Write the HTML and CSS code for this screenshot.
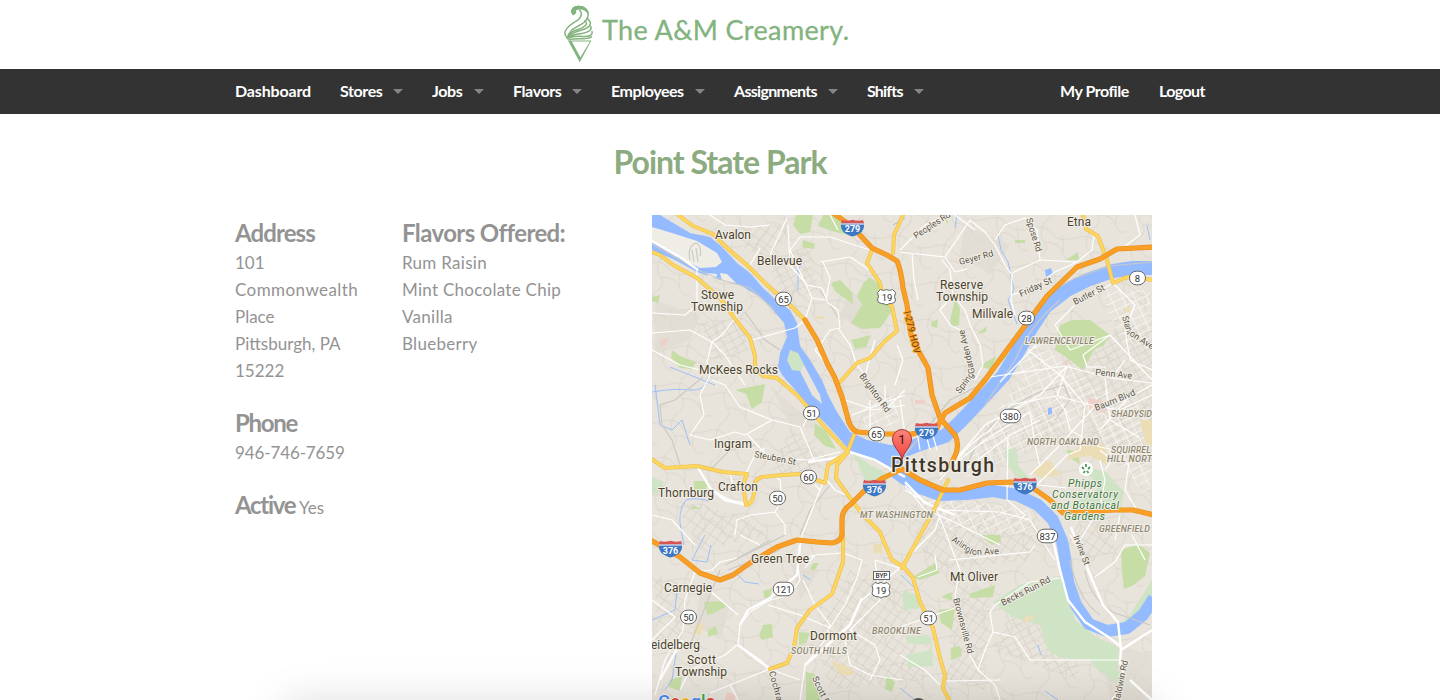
FILE: index.html
```html
<!DOCTYPE html>
<html lang="en">
<head>
<meta charset="utf-8">
<title>Point State Park | The A&amp;M Creamery</title>
<link rel="stylesheet" href="styles.css">
</head>
<body>
<header class="brand">
  <svg class="brand-logo" width="290" height="69" viewBox="560 0 290 69" role="img">
    <g class="cone">
      <path d="M573.4 14.2C570 11 572.5 6.8 578 6.6C584.5 6.4 588.6 10 588.2 15C587.8 18.5 585.5 21.8 581.5 24.2C575 27.8 568.8 30 567.4 38.5" />
      <path class="solid" d="M573 15.4C569.5 11 572.5 6 578.5 5.8C584 5.6 588.2 9 588.5 14.6C586.5 11.4 583 9.5 579.6 9.6C576.5 9.7 574.6 11.4 575.5 13.3Z" />
      <path d="M573.5 14.2C576 13.3 576.2 10.6 574.2 11M579.5 10C583 13.5 581.4 17.6 577 20.6C570.2 24.4 565.8 28 564.8 32.5C564.6 34.2 565.6 36 567.2 38" />
      <path d="M586.6 18.5C592 21.5 591.6 25.8 585.8 28.5C579.6 31.2 571.5 32 568.5 36.5" />
      <path d="M585 20.6C588 23.4 586.6 25.5 582 27.8C577.5 30 572 31 568.5 35" />
      <path d="M590.8 26.6C592.4 30 588 32.4 582 33.4C576 34.4 571 34.7 567.5 38M592 31.5C593 36 588 36.8 582 36.4C576 36 571 36.5 567.8 38.6" />
      <path d="M591.5 36.8C586 40.2 577 37.8 569 39.8" />
      <path class="solid" fill-rule="evenodd" d="M568 40.4L591.4 40.4L579.8 62.2ZM571.8 41.6L580.4 57.2L590 41.6Z" />
    </g>
    <text class="brand-name" x="602" y="40" textLength="247">The A&amp;M Creamery.</text>
  </svg>
</header>
<nav class="topbar">
  <ul class="menu">
    <li class="item w-dashboard"><a>Dashboard</a></li>
    <li class="item drop w-stores"><a>Stores</a></li>
    <li class="item drop w-jobs"><a>Jobs</a></li>
    <li class="item drop w-flavors"><a>Flavors</a></li>
    <li class="item drop w-employees"><a>Employees</a></li>
    <li class="item drop w-assignments"><a>Assignments</a></li>
    <li class="item drop w-shifts"><a>Shifts</a></li>
    <li class="item w-profile"><a>My Profile</a></li>
    <li class="item w-logout"><a>Logout</a></li>
  </ul>
</nav>
<main class="page">
  <h1 class="title">Point State Park</h1>
  <div class="columns">
    <section class="details">
      <h2 class="label l-address">Address</h2>
      <p class="text">101<br><span class="wide">Commonwealth</span><br>Place<br>Pittsburgh, PA<br>15222</p>
      <h2 class="label l-phone">Phone</h2>
      <p class="text t-phone">946-746-7659</p>
      <p class="text t-active"><strong class="label l-active">Active</strong> Yes</p>
    </section>
    <section class="flavors">
      <h2 class="label l-flavors">Flavors Offered:</h2>
      <p class="text t-flavors">Rum Raisin<br>Mint Chocolate Chip<br>Vanilla<br>Blueberry</p>
    </section>
    <svg class="map" width="500" height="485" viewBox="652 215 500 485">
      <defs>
        <pattern id="streets" width="9" height="7" patternUnits="userSpaceOnUse" patternTransform="rotate(-28)"><path d="M0 .5H9M.5 0V7" class="street"/></pattern>
        <pattern id="streets2" width="8" height="10" patternUnits="userSpaceOnUse" patternTransform="rotate(35)"><path d="M0 .5H8M.5 0V10" class="street"/></pattern>
        <pattern id="blocks" width="11" height="8" patternUnits="userSpaceOnUse" patternTransform="rotate(-25)"><path d="M0 .5H11M.5 0V8" class="block"/></pattern>
        <pattern id="lanes" width="46" height="38" patternUnits="userSpaceOnUse" patternTransform="rotate(12)"><path d="M0 8Q12 2 20 10T46 8M10 0Q6 14 14 20T10 38M14 20Q28 16 34 26T46 30M30 10Q34 18 34 26" class="street"/></pattern>
        <linearGradient id="pinFill" x1="0" y1="0" x2="0" y2="1"><stop offset="0" stop-color="#fb857c"/><stop offset="1" stop-color="#f0403a"/></linearGradient>
        <g id="interstate">
          <path d="M-11.5-5.5Q-12.5 2-7 5.6Q-3 8 0 8.6Q3 8 7 5.6Q12.5 2 11.5-5.5Z" class="sh-blue"/>
          <path d="M-11.5-4.5L-10.5-8Q-6-6.5 0-8.3Q6-6.5 10.5-8L11.5-4.5Z" class="sh-red"/>
          <path d="M-11.8-4H11.8" class="sh-line"/>
        </g>
        <g id="route2"><rect x="-8" y="-6.8" width="16" height="13.6" rx="6.8" class="sh-route"/></g>
        <g id="route3"><rect x="-10.3" y="-6.8" width="20.6" height="13.6" rx="6.8" class="sh-route"/></g>
        <path id="usroute" d="M-6-7.5Q-3-5.5 0-7.5Q3-5.5 6-7.5L9-4.5Q7 0 9 3Q9 6 5 6.5Q2 6.5 0 8Q-2 6.5-5 6.5Q-9 6-9 3Q-7 0-9-4.5Z" class="sh-route"/>
      </defs>
      <rect x="652" y="215" width="500" height="485" class="land"/>
      <rect x="652" y="215" width="500" height="485" fill="url(#lanes)"/>
      <g fill="url(#streets)">
        <path d="M765 262L810 245L818 290L787 300ZM700 322L740 320L750 350L715 362ZM790 430L835 460L800 478L770 470ZM985 425L1060 385L1065 435L975 478ZM1060 345L1152 320V470L1090 440ZM1030 580L1070 600L1080 680L990 650Z"/>
      </g>
      <g fill="url(#streets2)">
        <path d="M905 505L975 500L1040 520L1030 560L930 570ZM850 570L905 580L925 680L830 690L815 640ZM950 580L990 590L985 690L950 680ZM655 575L690 585L680 640L655 640ZM735 225L790 225L775 260L745 250ZM675 500L740 515L770 535L700 550ZM1070 525L1110 520L1115 550L1085 565Z"/>
      </g>
      <g fill="url(#blocks)">
        <path d="M985 425L1030 370L1075 360L1100 400L1045 440L965 478ZM1040 340L1075 375L1045 385L1010 370ZM1100 290L1150 290V350L1120 340ZM862 405L895 395L900 425L865 428ZM915 485L960 500L1030 510L1035 535L950 530ZM1070 375L1150 410V500L1110 455Z"/>
      </g>
      <g class="hill">
        <path d="M655 300L700 315L690 340L655 355ZM770 385L820 430L790 425ZM965 225L1010 245L990 275L960 255ZM790 560L820 570L800 600ZM1100 640L1152 655V700H1110ZM850 290L870 305L860 330L840 315ZM700 590L730 605L720 640L695 625Z"/>
      </g>
      <g class="park">
        <path d="M796 215H813L810 232L800 234L793 225ZM823 215H840L850 235L835 232L818 226ZM803 240L815 244L814 249L802 247ZM831 283L840 280L852 292L853 304L843 297L835 291ZM870 277L880 285L892 310L886 320L880 328L862 329L851 323L862 305L857 296L864 282ZM851 340L871 335L866 347L855 349ZM652 297L660 295L658 303L652 301ZM672 350L680 356L696 362L692 369L680 368L671 357ZM735 390L765 384L762 402L752 409L746 394ZM815 423L826 431L836 449L825 446L814 435ZM694 481L709 481L706 490L694 492ZM693 505L700 509L691 509ZM704 602L722 601L727 606L712 614L707 615ZM763 591L772 588L770 600L764 597ZM763 625L772 624L773 637L762 640L759 635ZM708 630L716 626L718 634L708 637ZM799 632L810 633L806 643L799 645ZM813 563L819 563L814 571L810 569ZM670 680L682 676L680 691L669 687ZM806 672L815 674L820 700H806ZM887 675L895 682L892 692L885 689Z"/>
        <path d="M1055 350L1060 325L1072 320L1090 320L1110 335L1104 345L1094 350L1083 370L1066 357ZM1066 260L1078 252L1079 260ZM1015 240H1025V243H1015ZM950 320L955 300L960 308L959 325L952 327ZM931 323L938 319L937 328L931 326ZM981 365L996 356L992 370L982 367ZM977 334L987 326L986 332ZM1014 350L1010 360L1001 367L1006 355ZM941 215H948V224ZM1066 450L1078 451L1080 464L1070 458ZM1121 550L1139 544L1150 553L1145 576L1132 586L1124 589L1122 572ZM941 597L951 592L953 601ZM939 610L955 608L952 630L941 623ZM913 577L935 563L940 573L920 580ZM951 648L960 646L962 656L951 660ZM969 594L995 585L993 597L971 598ZM981 535H1000L1001 542L992 545Z"/>
      </g>
      <g class="forest">
        <path d="M993 602L1020 585L1060 576L1068 590L1075 620L1095 636L1119 648L1117 675L1100 672L1090 660L1060 658L1048 650L1040 625L1015 618L1000 608ZM1078 464L1106 472L1124 492L1121 507L1070 507L1100 487ZM1005 450L1016 448L1018 465L1028 477L1035 484L1020 480L1007 465ZM652 477L664 482L660 492L652 495ZM903 590L916 595L920 608L903 610ZM905 637L928 635L932 645L908 643ZM906 655L932 650L933 666L908 667ZM853 453L870 465L890 475L884 488L865 480ZM787 352L797 350L805 364L797 370L787 365ZM1115 628L1130 615L1152 580V602L1130 620ZM1104 673L1120 672L1118 685Z"/>
      </g>
      <g class="campus">
        <path d="M1065 460L1085 440L1105 445L1107 465L1090 456L1075 458ZM1031 472L1050 460L1060 475L1041 478ZM1140 420H1152V447L1145 442ZM695 625L704 623L701 635L693 633ZM830 660L850 668L855 675L840 675ZM1023 619L1030 614L1034 618L1026 623ZM817 316H824V319H817ZM873 544H882V553H874ZM1123 310L1130 305V313Z"/>
      </g>
      <path class="rose" d="M660 340L669 338L665 345L660 347ZM915 400H925V404H915ZM1062 363L1070 360L1066 367ZM1087 397L1110 403L1105 413L1090 410ZM727 692L735 695V700H725Z"/>

      <g class="creek">
        <path d="M652 392Q675 388 690 390T708 377M655 385L660 425L672 430L682 420L690 445M709 501Q696 497 686 500Q677 512 681 530L684 545M705 535L692 560L707 562L711 545M670 367L690 375L715 385M957 215L955 228M998 235L1001 250L1008 262L1014 290L1008 300L1017 324M652 620L675 610L677 590M678 640L672 680L665 690M798 290L798 270L803 262M893 225L905 218M738 575L745 582L759 584M803 575L811 580M901 575L917 590L928 620M900 688L915 700M1147 225L1150 240M1038 645L1041 655M1045 691L1058 700"/>
      </g>
      <path class="water" d="M652 215H660L675 224L690 233L710 237L721 246L737 263L750 273L763 288L777 301L790 310L797 323L800 346L810 360L822 380L828 395L837 412L850 432L867 440L890 445L903 444V476L890 469L877 462L853 454L830 428L810 408L797 392L782 375L778 367L780 353L787 337L784 323L773 310L760 297L740 285L720 280L697 272L675 260L652 250Z"/>
      <path class="isle" d="M652 227L672 233L697 241L717 253L722 262L716 267L700 268L675 256L652 242Z"/>
      <path class="isle" d="M720 273L727 274L736 283L722 281ZM706 273L717 274L716 278L709 277Z"/>
      <path class="bankshade" d="M652 244L680 260L700 271L725 281L750 288L770 306L776 314"/>
      <path class="forest" d="M790 350L798 353L804 365L800 371L792 370L787 360Z"/>
      <path class="land" d="M800 371L804 365L812 380L820 395L822 404L812 395Z"/>
      <path class="river allegheny" d="M900 452L920 444L945 436L960 422L980 401L1003 376L1017 353L1030 330L1045 307L1067 290L1087 280L1113 271L1133 268L1154 268"/>
      <path class="river mon" d="M895 472L905 479L920 488L940 495L967 494L993 491L1017 495L1038 505L1053 520L1062 541L1065 557L1068 582L1076 605L1089 624L1107 631L1127 628L1143 615L1154 598"/>
      <path class="pond" d="M1045 270L1051 268L1053 274L1046 277ZM1048 408L1052 407V414L1048 415Z"/>

      <g class="rail">
        <path d="M1152 262L1110 266L1075 278L1050 292M1060 300Q1030 325 1015 360L985 405M703 377L675 400L660 405L662 425L672 440L680 465L710 470L730 450L755 445M745 312L765 340L780 350M1085 570Q1090 600 1115 613L1150 625M1070 560Q1078 600 1100 615M735 560L770 540M688 650L720 570M905 455L950 400L980 385M820 290L840 320M965 470Q985 415 1040 392L1064 385L1070 400L1055 420M830 485L810 510L800 535"/>
        <path d="M725 565L785 535M728 570L780 550M690 260Q687 246 696 243Q702 246 700 256M694 262L692 250M698 262L696 248"/>
      </g>

      <g class="minor">
        <path d="M710 215L725 225L750 227L770 225M787 218L770 255M760 248L750 265M788 225L790 265L807 285L822 288L828 303L838 310L840 328L830 330L820 345L815 350M805 320L812 298L825 300M812 298L790 250L800 237L830 237L870 250M820 262L850 257L870 270M823 262L830 278L826 300M838 328L850 345L857 365L865 375M815 350L840 382M697 268L697 305L685 315L652 313M735 315L752 340L795 328L805 320M652 333L690 330L712 342L725 355L745 385M712 342L707 362L710 375L700 395L704 415L690 435L710 440L735 432L745 435L772 420L800 427L815 462M712 380L725 385L740 407L772 420M748 435L760 448L770 458L808 460L840 452M745 475L755 455L765 448M803 427L810 410M735 318L722 335L712 342M652 350L680 365L720 375M815 350L828 365"/>
        <path d="M697 466L712 490L730 500L745 503M730 475L735 490M737 558L720 562L712 570L695 572L685 600L683 630L665 660L655 695M735 535L737 520L750 515L775 512L785 525L785 535M775 512L782 500L780 480L773 475M815 485L820 490L810 515L802 535L797 560L800 580L790 595L770 600L750 612L740 625L738 645L760 660L770 669M737 645L725 655L690 670L680 690M770 669L730 685L710 693M730 685L738 700M770 669L800 680M709 590L738 615M768 605L800 615L830 628L845 605L858 575L862 560L843 553M820 490L825 478L835 490L850 497M803 580L815 605L830 625L825 640L805 665L800 700M800 560L815 555L843 553M805 568L815 555M862 600L880 585L903 565M850 630L880 600L875 560L905 570M652 600L675 617L652 640M652 515L672 520L695 545M760 545L740 535M850 630L875 645L880 660L870 680M845 640L850 665L870 675L903 680"/>
        <path d="M900 252L945 257L970 220L985 232L995 245L1005 265L1012 275L1011 300L1015 315M900 250L910 240L925 225L945 215M995 240L1005 225L1025 218M955 215L975 230M945 257L955 272L967 269M912 253L914 280L918 300M942 260L950 270L953 295L965 310L970 325L980 345L983 365L975 380M953 295L940 310L950 325L960 330M1012 273L1040 260L1077 262L1092 250L1094 235M1025 218L1037 230L1040 260M1011 295L1030 290L1055 272L1077 262M1038 343L1000 382M1028 350L1060 375L1085 405M1055 325L1075 305L1113 283M1055 325L1070 350L1110 335L1152 380M1113 283L1135 305L1125 330L1130 360L1152 370M1110 335L1083 355L1087 367L1105 367M990 377L1065 366L1110 378L1152 383M1067 366L1057 396L1095 406L1125 400L1152 385M940 480L970 445L990 430L1010 405L1055 396L1065 410L1070 430L1100 447L1140 455M955 460L985 425L1040 395L1067 366M965 470L1010 435L1040 420M940 475L985 440L1030 412L1035 445L1040 467M1105 378L1110 420L1140 438M1085 405L1080 450L1067 455L1037 485M1125 360L1112 378M1152 395L1120 410L1095 406L1060 445L1030 475M1105 470L1112 460L1100 450M1038 485L1067 488M1130 455L1125 490L1140 515M1008 435L1007 500L1025 515L1020 520M1100 430L1135 390M930 450L925 430M937 450L930 425M920 450L916 425M905 490L940 510L1000 512L1030 520L1045 545L1055 560M905 485L925 510L950 520L1000 545M935 505L960 570L955 595L970 655L978 670L995 685L1000 700M995 605L1030 582L1060 578M993 632L1015 637L1030 660L1065 660L1100 660L1120 660M978 670L985 650L993 632L990 612L995 605M945 681L1000 680M918 577L937 570L935 555M900 627L955 608M900 655L925 670L940 685M950 560L1030 552L1035 545M1095 577L1115 562L1125 545L1152 545M1132 535L1145 560M1100 460L1105 480L1100 507L1080 540M1120 515L1115 540M1070 535L1085 560L1092 577M830 215L838 230M875 340L865 375M897 345L903 360L895 385M845 400L875 410L905 405M900 400L905 435M870 400L870 435M885 385L885 410L905 390M852 415L905 395M940 515L935 530L905 560M1135 215L1140 235L1120 250"/>
      </g>
      <g class="major">
        <path d="M652 241L680 257L698 270M697 466L710 488L725 500L747 505M808 462L835 458L850 452L875 460L905 477M1053 540L1060 570L1068 600L1085 622L1110 638L1121 647L1120 665M1071 527L1090 575L1103 605L1118 622L1121 650L1152 630M1124 665L1120 690L1112 700M1130 680L1152 700M905 482L925 503L955 515M740 625L748 610L770 598L797 575L800 545M738 645L770 669M862 598L850 625L805 665M682 640L660 680"/>
      </g>

      <g class="yellow-edge">
        <path id="y65" d="M678 215L693 226L713 234L727 248L747 265L767 285L790 305L805 320"/>
        <path id="y51" d="M652 252L660 255L673 265L697 278L720 298L733 316L750 338L755 356L755 368L763 376L777 378L797 395L823 425L848 452L837 465L836 478L850 498L863 515L880 532L886 547L892 560L904 567L913 578L920 602L933 628L940 658L945 675L943 688L950 702"/>
        <path id="yliberty" d="M948 480L933 512L913 548L902 568"/>
        <path id="y60" d="M650 458L665 468L697 466L723 472L747 474L743 485L746 505Q753 504 754 493Q753 479 762 477L783 475L800 474L825 483L828 465L847 453L854 435"/>
        <path id="ygreen" d="M843 533V562L832 594L810 610L797 628L794 648L787 663L770 669"/>
        <path id="y19" d="M872 250L867 263L880 283L883 300L892 306L897 331L885 341L870 358L857 363L840 382M903 215L894 235L893 253"/>
        <path id="y8" d="M1083 215L1086 229L1098 236L1107 260L1113 283L1127 277L1154 280"/>
      </g>
      <g class="yellow">
        <use href="#y65"/><use href="#y51"/><use href="#yliberty"/><use href="#y60"/><use href="#ygreen"/><use href="#y19"/><use href="#y8"/>
      </g>
      <g class="orange-edge">
        <path id="o279" d="M833 213L850 225L860 235L872 248L887 255L897 261Q901 270 903 288L907 305L911 335L918 350L928 368L932 395L940 418L955 435Q960 445 955 456L950 466"/>
        <path id="o28" d="M937 427L945 413L970 398L985 380L1007 350L1027 323L1047 296L1077 267L1100 259L1117 249L1154 247"/>
        <path id="o65" d="M805 320L817 340L827 363L835 378L842 397L847 415Q850 430 858 432L880 434L912 434L937 428"/>
        <path id="o376" d="M650 540L663 547L680 557L700 573L720 580L733 575L750 563L777 547L797 540L817 542L832 543Q841 542 842 534V520Q842 510 850 505L863 492L883 478L902 469L920 480L943 490L960 490L987 483L1013 482L1033 488L1050 500L1063 513L1087 512L1113 510L1133 510L1154 515"/>
      </g>
      <g class="orange"><use href="#o279"/><use href="#o28"/><use href="#o65"/><use href="#o376"/></g>

      <g class="town">
        <text x="715" y="239" textLength="36">Avalon</text>
        <text x="757" y="265" textLength="45">Bellevue</text>
        <text x="701" y="299" textLength="33">Stowe</text>
        <text x="691" y="311" textLength="52">Township</text>
        <text x="699" y="374" textLength="79">McKees Rocks</text>
        <text x="1067" y="226" textLength="24">Etna</text>
        <text x="940" y="289" textLength="43">Reserve</text>
        <text x="936" y="301" textLength="52">Township</text>
        <text x="972" y="318" textLength="41">Millvale</text>
        <text x="714" y="448" textLength="38">Ingram</text>
        <text x="718" y="491" textLength="40">Crafton</text>
        <text x="658" y="497" textLength="56">Thornburg</text>
        <text x="751" y="563" textLength="58">Green Tree</text>
        <text x="664" y="592" textLength="48">Carnegie</text>
        <text x="651" y="649" textLength="49">eidelberg</text>
        <text x="687" y="664" textLength="29">Scott</text>
        <text x="675" y="676" textLength="52">Township</text>
        <text x="810" y="640" textLength="47">Dormont</text>
        <text x="950" y="581" textLength="48">Mt Oliver</text>
      </g>
      <g class="district">
        <text x="1025" y="344" textLength="69">LAWRENCEVILLE</text>
        <text x="1027" y="445" textLength="72">NORTH OAKLAND</text>
        <text x="1111" y="417" textLength="41">SHADYSID</text>
        <text x="1111" y="453" textLength="40">SQUIRREL</text>
        <text x="1107" y="462" textLength="45">HILL NORT</text>
        <text x="1099" y="532" textLength="51">GREENFIELD</text>
        <text x="860" y="518" textLength="73">MT WASHINGTON</text>
        <text x="872" y="634" textLength="49">BROOKLINE</text>
        <text x="791" y="654" textLength="56">SOUTH HILLS</text>
      </g>
      <g class="road">
        <text transform="translate(916 239) rotate(-33)" textLength="42">Peoples Rd</text>
        <text transform="translate(1026 219) rotate(73)" textLength="35">Spose Rd</text>
        <text transform="translate(960 265) rotate(-15)" textLength="35">Geyer Rd</text>
        <text transform="translate(1021 297) rotate(-25)" textLength="35">Friday St</text>
        <text transform="translate(1075 305) rotate(-27)" textLength="34">Butler St</text>
        <text transform="translate(1122 317) rotate(73)" textLength="19">Stant</text>
        <text transform="translate(1129 335) rotate(33)" textLength="27">on Ave</text>
        <text transform="translate(1095 375) rotate(6)" textLength="37">Penn Ave</text>
        <text transform="translate(1096 411) rotate(-22)" textLength="43">Baum Blvd</text>
        <text transform="translate(960 394) rotate(-54)" textLength="24">Spring</text>
        <text transform="translate(975 373) rotate(-104)" textLength="45">Garden Ave</text>
        <text transform="translate(859 376) rotate(54)" textLength="46">Brighton Rd</text>
        <text transform="translate(754 457) rotate(11)" textLength="42">Steuben St</text>
        <text transform="translate(1073 537) rotate(68)" textLength="31">Irvine St</text>
        <text transform="translate(951 541) rotate(34)" textLength="24">Arlingt</text>
        <text transform="translate(972 555) rotate(-2)" textLength="27">on Ave</text>
        <text transform="translate(1003 606) rotate(-27)" textLength="54">Becks Run Rd</text>
        <text transform="translate(953 599) rotate(75)" textLength="57">Brownsville Rd</text>
        <text transform="translate(1119 704) rotate(-78)" textLength="44">Baldwin Rd</text>
        <text transform="translate(769 672) rotate(75)" textLength="50">Cochran Rd</text>
        <text transform="translate(812 678) rotate(65)" textLength="35">Scott Rd</text>
        <text class="hov" transform="translate(904 312) rotate(76)" textLength="43">I-279 HOV</text>
      </g>
      <circle cx="1086" cy="469" r="7" class="poi-dot"/>
      <path class="poi-flower" d="M1086 464V467M1082 467L1084 469M1090 467L1088 469M1083.5 473L1085 471M1088.5 473L1087 471"/>
      <g class="poi">
        <text x="1068" y="487" textLength="34">Phipps</text>
        <text x="1052" y="498" textLength="66">Conservatory</text>
        <text x="1051" y="509" textLength="68">and Botanical</text>
        <text x="1064" y="520" textLength="41">Gardens</text>
      </g>

      <g class="shields">
        <use href="#interstate" x="852.5" y="228"/><text class="on-blue" x="852.5" y="232">279</text>
        <use href="#interstate" x="926.5" y="431"/><text class="on-blue" x="926.5" y="435.5">279</text>
        <use href="#interstate" x="874.5" y="488"/><text class="on-blue" x="874.5" y="492.5">376</text>
        <use href="#interstate" x="1025" y="486"/><text class="on-blue" x="1025" y="490">376</text>
        <use href="#interstate" x="670.5" y="549"/><text class="on-blue" x="670.5" y="553.5">376</text>
        <use href="#route2" x="783.5" y="299"/><text x="783.5" y="302.5">65</text>
        <use href="#route2" x="876.5" y="434"/><text x="876.5" y="437.5">65</text>
        <use href="#route2" x="811.5" y="413"/><text x="811.5" y="416.5">51</text>
        <use href="#route2" x="808.5" y="477"/><text x="808.5" y="480.5">60</text>
        <use href="#route2" x="777.5" y="498"/><text x="777.5" y="501.5">50</text>
        <use href="#route2" x="688.5" y="617"/><text x="688.5" y="620.5">50</text>
        <use href="#route2" x="928.5" y="618"/><text x="928.5" y="621.5">51</text>
        <use href="#route2" x="1026.5" y="318"/><text x="1026.5" y="321.5">28</text>
        <use href="#route2" x="1137.5" y="278"/><text x="1137.5" y="281.5">8</text>
        <use href="#route3" x="783.5" y="589"/><text x="783.5" y="592.5">121</text>
        <use href="#route3" x="1010.5" y="416"/><text x="1010.5" y="419.5">380</text>
        <use href="#route3" x="1047.5" y="536"/><text x="1047.5" y="539.5">837</text>
        <use href="#usroute" x="886.5" y="297"/><text x="887" y="300.5">19</text>
        <use href="#usroute" x="881" y="590"/><text x="881" y="593.5">19</text>
        <rect x="873.5" y="571.5" width="16" height="8" class="sh-route"/><text class="byp" x="881.5" y="578.3">BYP</text>
      </g>
      <text class="city" x="891" y="472" textLength="103">Pittsburgh</text>
      <path class="pin" d="M902 460C901 452 892.5 447 892.5 439A9.5 9.5 0 0 1 911.5 439C911.5 447 903 452 902 460Z"/>
      <text class="pin-label" x="902" y="444">1</text>
      <text class="google" x="658" y="708"><tspan class="g-blue">G</tspan><tspan class="g-red">o</tspan><tspan class="g-yellow">o</tspan><tspan class="g-blue">g</tspan><tspan class="g-green">l</tspan><tspan class="g-red">e</tspan></text>
      <path class="corner" d="M913 700Q918 696 924 700"/>
    </svg>
  </div>
</main>
<div class="edge"><div class="edge-shadow"></div></div>
</body>
</html>
```
FILE: styles.css
```css
* { box-sizing: border-box; }
html, body { height: 700px; overflow: hidden; }
body { margin: 0; position: relative; background: #fff; font-family: Lato, "Open Sans", sans-serif; }

.brand { height: 69px; padding-left: 560px; }
.brand-logo { display: block; }
.cone path { fill: none; stroke: #83b37e; stroke-width: 1.5; stroke-linecap: round; }
.cone .solid { fill: #83b37e; stroke: none; }
.brand-name { font: 27px Lato, sans-serif; fill: #83b37e; stroke: #83b37e; stroke-width: .3; }

.topbar { height: 45px; background: #333; }
.menu { display: flex; width: 1000px; margin: 0 auto; padding: 0; list-style: none; }
.item { position: relative; height: 45px; padding-left: 15px; line-height: 43px; font-size: 16px; font-weight: 700; color: #fff; white-space: nowrap; }
.drop::after { content: ""; position: absolute; right: 14px; top: 20px; border: 5px solid transparent; border-top-color: #858585; border-bottom: 0; }
.w-dashboard { width: 105px; letter-spacing: -.15px; }
.w-stores { width: 92px; letter-spacing: -.4px; }
.w-jobs { width: 81px; letter-spacing: -.4px; }
.w-flavors { width: 98px; letter-spacing: -.4px; }
.w-employees { width: 123px; letter-spacing: -.45px; }
.w-assignments { width: 133px; letter-spacing: -.7px; }
.w-shifts { width: 86px; letter-spacing: -.8px; }
.w-profile { width: 99px; margin-left: auto; letter-spacing: -.5px; }
.w-logout { width: 76px; letter-spacing: -.6px; }

.page { width: 970px; margin: 0 auto; }
.title { height: 101px; margin: 0; padding-top: 25px; line-height: 46px; font-size: 32px; font-weight: 700; letter-spacing: -1px; color: #8cab80; text-align: center; }
.columns { display: grid; grid-template-columns: 167px 250px 500px; height: 485px; }
.details, .flavors { padding-top: 1px; }
.label { margin: 0; line-height: 33px; font-size: 24px; font-weight: 700; letter-spacing: -.9px; color: #939393; white-space: nowrap; }
.l-phone, .l-active { letter-spacing: -1.3px; }
.l-flavors { letter-spacing: -.6px; }
.text { margin: 0; line-height: 27px; font-size: 17px; color: #939393; }
.wide { letter-spacing: .42px; }
.t-flavors { letter-spacing: .28px; }
.t-phone { letter-spacing: -.12px; }
.l-phone { margin-top: 22px; }
.t-active { margin-top: 22px; line-height: 33px; }
.map { display: block; }

.land { fill: #e8e4db; }
.hill { fill: #dfdbd0; opacity: .6; }
.isle { fill: #efede5; }
.street { fill: none; stroke: #d6d1c7; stroke-width: .7; }
.block { fill: none; stroke: #faf9f6; stroke-width: .7; }
.park { fill: #c6dda5; }
.forest { fill: #cfe3c5; }
.campus { fill: #ebddb6; }
.rose { fill: #efd0c8; }
.water, .pond { fill: #94bbff; }
.river { fill: none; stroke: #94bbff; stroke-linejoin: round; }
.allegheny { stroke-width: 14px; }
.mon { stroke-width: 12px; }
.creek path { fill: none; stroke: #9cc0fa; stroke-width: 1; }
.bankshade, .rail path { fill: none; stroke: #cbc9c5; stroke-width: 1.2; }
.minor path { fill: none; stroke: #fff; stroke-width: 1.2; stroke-linejoin: round; }
.major path { fill: none; stroke: #fff; stroke-width: 2.4; stroke-linejoin: round; }
.yellow-edge, .yellow, .orange-edge, .orange { fill: none; stroke-linejoin: round; stroke-linecap: round; }
.yellow-edge { stroke: #e9bd58; stroke-width: 4px; }
.yellow { stroke: #fed65b; stroke-width: 2.8px; }
.orange-edge { stroke: #e88f1d; stroke-width: 5.2px; }
.orange { stroke: #fa9f25; stroke-width: 3.8px; }

.map text { font-family: Roboto, sans-serif; paint-order: stroke; stroke: #f1eee8; stroke-width: 2px; stroke-linejoin: round; }
.town { font-size: 12px; fill: #4b422b; }
.district { font-size: 9px; font-style: italic; fill: #8e866f; font-weight: 500; }
.road { font-size: 9px; fill: #5b5545; }
.map .hov { stroke: #fa9f25; fill: #65410b; }
.poi { font-size: 10.5px; font-style: italic; fill: #37783c; }
.poi-dot { fill: #fff; }
.poi-flower { fill: none; stroke: #4a9a55; stroke-width: 1.8; }
.map .city { font-size: 19.5px; font-weight: 500; fill: #40382a; stroke-width: 2.5px; }
.sh-blue { fill: #3c78c3; }
.sh-red { fill: #d95454; }
.sh-line { stroke: #fff; stroke-width: 1; }
.sh-route { fill: #fff; stroke: #686868; stroke-width: 1; }
.map .shields text { font-size: 9.5px; text-anchor: middle; fill: #333; stroke: none; }
.map .shields .on-blue { font-size: 9px; font-weight: 700; fill: #fff; }
.map .shields .byp { font-size: 6.5px; font-weight: 500; }
.pin { fill: url(#pinFill); stroke: #a83832; stroke-width: 1; }
.map .pin-label { font-size: 13px; text-anchor: middle; fill: #351411; stroke: none; }
.map .google { font-size: 18px; font-weight: 500; stroke: #fff; stroke-width: 1px; }
.g-blue { fill: #4285f4; }
.g-red { fill: #ea4335; }
.g-yellow { fill: #fbbc05; }
.g-green { fill: #34a853; }
.corner { fill: #555; }

/* soft shadow rising from the bottom edge of the window */
.edge { position: absolute; left: 0; right: 0; bottom: 0; height: 60px; overflow: hidden; }
.edge-shadow { width: 870px; height: 100px; margin: 63px auto 0; box-shadow: 0 0 44px rgba(0, 0, 0, .15); }
```
